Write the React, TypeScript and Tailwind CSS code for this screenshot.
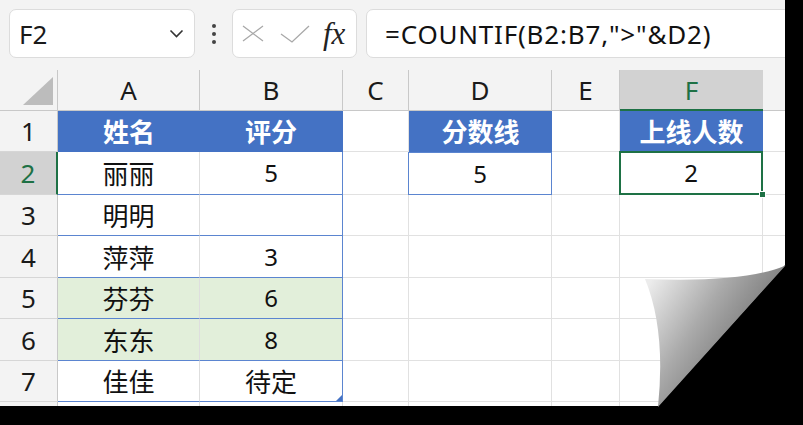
import React from 'react'

const latin = { fontFamily: '"Noto Sans", "Noto Sans CJK SC", sans-serif' }
const cjk = { fontFamily: '"Noto Sans CJK SC", "Noto Sans", sans-serif' }

const cols = ['A', 'B', 'C', 'D', 'E', 'F', '']

interface Row {
  a: string
  b: string
  fill: 'head' | 'white' | 'green'
}

const rows: Row[] = [
  { a: '姓名', b: '评分', fill: 'head' },
  { a: '丽丽', b: '5', fill: 'white' },
  { a: '明明', b: '', fill: 'white' },
  { a: '萍萍', b: '3', fill: 'white' },
  { a: '芬芬', b: '6', fill: 'green' },
  { a: '东东', b: '8', fill: 'green' },
  { a: '佳佳', b: '待定', fill: 'white' },
]

function CellText({ value, bold }: { value: string; bold?: boolean }) {
  const isNum = /^[0-9]+$/.test(value)
  return (
    <span
      style={isNum ? latin : cjk}
      className={`${isNum ? 'text-[24px]' : 'text-[26px]'} ${bold ? 'font-bold text-white' : 'text-[#111]'} leading-none`}
    >
      {value}
    </span>
  )
}

export default function App() {
  return (
    <div className="relative w-[803px] h-[425px] bg-black overflow-hidden">
      <div className="w-[785px] h-[406px] bg-white overflow-hidden flex flex-col">
        {/* formula bar */}
        <div className="h-[70px] shrink-0 bg-[#f3f3f3] flex items-start pt-[9px] pl-[9px] overflow-hidden">
          <div className="shrink-0 w-[186px] h-[49px] bg-white border border-[#dcdcdc] rounded-[7px] flex items-center justify-between pl-[9px] pr-[10px]">
            <span style={latin} className="text-[26px] text-[#1a1a1a] leading-none">F2</span>
            <svg width="15" height="9" viewBox="0 0 15 9" fill="none">
              <path d="M1.5 1.5l6 6 6-6" stroke="#333" strokeWidth="1.6" />
            </svg>
          </div>
          <div className="shrink-0 w-[37px] h-[49px] flex flex-col items-center justify-center gap-[4px]">
            <span className="w-[4px] h-[4px] rounded-full bg-[#444]" />
            <span className="w-[4px] h-[4px] rounded-full bg-[#444]" />
            <span className="w-[4px] h-[4px] rounded-full bg-[#444]" />
          </div>
          <div className="shrink-0 w-[125px] h-[49px] bg-white border border-[#dcdcdc] rounded-[7px] flex items-center pl-[9px] gap-[16px]">
            <svg width="22" height="17" viewBox="0 0 22 17" fill="none">
              <path d="M1 1l20 15M21 1L1 16" stroke="#a8a8a8" strokeWidth="1.3" />
            </svg>
            <svg width="30" height="18" viewBox="0 0 30 18" fill="none">
              <path d="M1 9l11 8L29 1" stroke="#a8a8a8" strokeWidth="1.3" />
            </svg>
            <span
              style={{ fontFamily: '"Liberation Serif", "DejaVu Serif", serif' }}
              className="text-[31px] italic text-[#222] leading-none -ml-[3px]"
            >
              fx
            </span>
          </div>
          <div className="shrink-0 ml-[9px] w-[440px] h-[49px] bg-white border border-[#dcdcdc] rounded-[7px] flex items-center pl-[18px]">
            <span style={latin} className="text-[26px] tracking-[0.8px] text-[#111] leading-none">
              =COUNTIF(B2:B7,"&gt;"&amp;D2)
            </span>
          </div>
        </div>

        {/* sheet */}
        <div className="grid grid-cols-[58px_142px_143px_66px_143px_68px_143px_100px] grid-rows-[41px_41px_43px_41px_42px_41px_42px_41px_20px]">
          {/* column headers */}
          <div className="relative bg-[#f3f3f3] border-r border-b border-[#c8c8c8]">
            <svg className="absolute left-0 top-0" width="58" height="41" viewBox="0 0 58 41">
              <polygon points="23,35 53,35 53,7" fill="#bcbcbc" />
            </svg>
          </div>
          {cols.map((c, i) =>
            c === 'F' ? (
              <div
                key={i}
                className="bg-[#d2d2d2] border-b-2 border-[#1e7145] flex items-center justify-center"
              >
                <span style={latin} className="text-[26px] text-[#1e7145] leading-none">{c}</span>
              </div>
            ) : (
              <div
                key={i}
                className="bg-[#f3f3f3] border-r border-b border-[#c8c8c8] flex items-center justify-center"
              >
                <span style={latin} className="text-[26px] text-[#1a1a1a] leading-none">{c}</span>
              </div>
            ),
          )}

          {rows.map((r, i) => {
            const n = i + 1
            const head = r.fill === 'head'
            const rowBg = head ? 'bg-[#4472c4]' : r.fill === 'green' ? 'bg-[#e2efda]' : 'bg-white'
            return (
              <React.Fragment key={n}>
                {n === 2 ? (
                  <div className="bg-[#d2d2d2] border-r-2 border-r-[#1e7145] border-b border-b-[#d6d6d6] flex items-center justify-center">
                    <span style={latin} className="text-[26px] text-[#1e7145] leading-none">{n}</span>
                  </div>
                ) : (
                  <div className="bg-[#f3f3f3] border-r border-r-[#c8c8c8] border-b border-b-[#d6d6d6] flex items-center justify-center">
                    <span style={latin} className="text-[26px] text-[#1a1a1a] leading-none">{n}</span>
                  </div>
                )}
                <div
                  className={`${rowBg} ${head ? 'border-r-0 border-b-[#4472c4]' : 'border-r border-r-[#dedede] border-b-[#5b85d0]'} border-b flex items-center justify-center`}
                >
                  <CellText value={r.a} bold={head} />
                </div>
                <div
                  className={`relative ${rowBg} ${head ? 'border-r-[#4472c4] border-b-[#4472c4]' : 'border-r-[#5b85d0] border-b-[#5b85d0]'} border-r border-b flex items-center justify-center`}
                >
                  <CellText value={r.b} bold={head} />
                  {n === 7 && (
                    <svg className="absolute right-0 bottom-0" width="6" height="6" viewBox="0 0 6 6">
                      <polygon points="0,6 6,0 6,6" fill="#4472c4" />
                    </svg>
                  )}
                </div>
                {/* C */}
                <div className="border-r border-b border-[#e1e1e1]" />
                {/* D */}
                {n === 1 ? (
                  <div className="bg-[#4472c4] border-b border-[#4472c4] flex items-center justify-center">
                    <CellText value="分数线" bold />
                  </div>
                ) : n === 2 ? (
                  <div className="border border-[#5b85d0] -ml-px flex items-center justify-center">
                    <CellText value="5" />
                  </div>
                ) : (
                  <div className="border-r border-b border-[#e1e1e1]" />
                )}
                {/* E */}
                <div className="border-r border-b border-[#e1e1e1]" />
                {/* F */}
                {n === 1 ? (
                  <div className="bg-[#4472c4] border-b border-[#4472c4] flex items-center justify-center">
                    <CellText value="上线人数" bold />
                  </div>
                ) : n === 2 ? (
                  <div className="relative border-r border-b border-[#e1e1e1] flex items-center justify-center">
                    <CellText value="2" />
                    <div className="absolute -left-[1px] -top-[1px] -right-[1px] -bottom-[1px] border-2 border-[#1e7145]" />
                    <div className="absolute -right-[4px] -bottom-[4px] w-[7px] h-[7px] bg-[#1e7145] border border-white" />
                  </div>
                ) : (
                  <div className="border-r border-b border-[#e1e1e1]" />
                )}
                {/* G */}
                <div className="border-r border-b border-[#e1e1e1]" />
              </React.Fragment>
            )
          })}

          {/* row 8 sliver */}
          <div className="bg-[#f3f3f3] border-r border-[#c8c8c8]" />
          <div className="border-r border-[#dedede]" />
          <div className="border-r border-[#dedede]" />
          <div className="border-r border-[#e1e1e1]" />
          <div className="border-r border-[#e1e1e1]" />
          <div className="border-r border-[#e1e1e1]" />
          <div className="border-r border-[#e1e1e1]" />
          <div />
        </div>
      </div>

      {/* page curl */}
      <svg className="absolute left-0 top-0 pointer-events-none" width="803" height="425" viewBox="0 0 803 425">
        <defs>
          <linearGradient id="curl" x1="650" y1="282" x2="745" y2="345" gradientUnits="userSpaceOnUse">
            <stop offset="0" stopColor="#ececec" />
            <stop offset="0.55" stopColor="#a9a9a9" />
            <stop offset="1" stopColor="#7c7c7c" />
          </linearGradient>
        </defs>
        <polygon points="657,407 786,264 786,407" fill="#000" />
        <path d="M645 279 Q666 330 658 407 L785.5 265.5 Q745 283 645 279 Z" fill="url(#curl)" />
      </svg>
    </div>
  )
}
